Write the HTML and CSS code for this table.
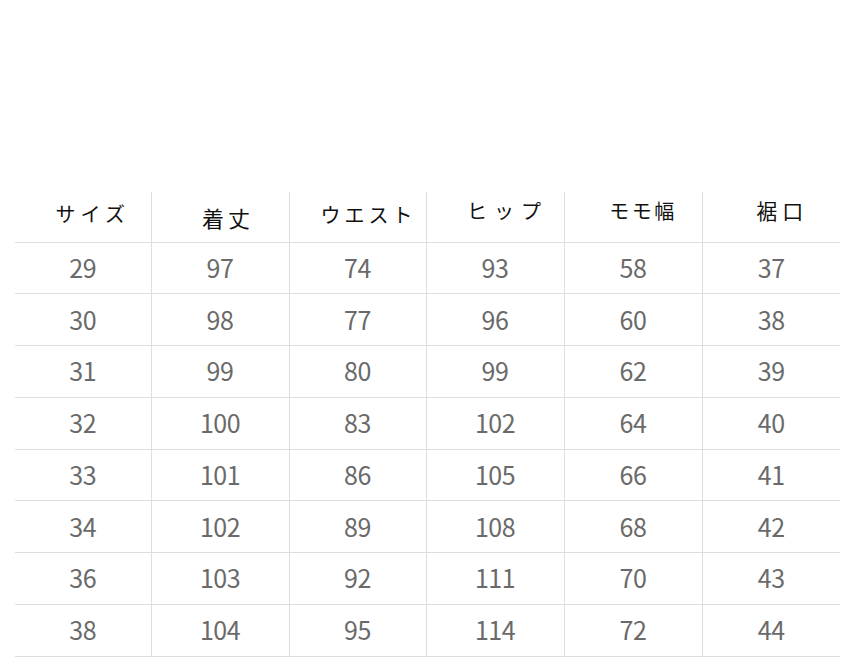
FILE: index.html
```html
<!DOCTYPE html>
<html lang="ja">
<head>
<meta charset="utf-8">
<link rel="stylesheet" href="styles.css">
</head>
<body>
<table class="size-table">
  <colgroup>
    <col class="c1"><col class="c2"><col class="c3"><col class="c4"><col class="c5"><col class="c6">
  </colgroup>
  <thead>
    <tr class="head-row">
      <th class="h-size">サイズ</th>
      <th class="h-length">着丈</th>
      <th class="h-waist">ウエスト</th>
      <th class="h-hip">ヒップ</th>
      <th class="h-thigh">モモ幅</th>
      <th class="h-hem">裾口</th>
    </tr>
  </thead>
  <tbody>
    <tr><td>29</td><td>97</td><td>74</td><td>93</td><td>58</td><td>37</td></tr>
    <tr><td>30</td><td>98</td><td>77</td><td>96</td><td>60</td><td>38</td></tr>
    <tr><td>31</td><td>99</td><td>80</td><td>99</td><td>62</td><td>39</td></tr>
    <tr><td>32</td><td>100</td><td>83</td><td>102</td><td>64</td><td>40</td></tr>
    <tr><td>33</td><td>101</td><td>86</td><td>105</td><td>66</td><td>41</td></tr>
    <tr><td>34</td><td>102</td><td>89</td><td>108</td><td>68</td><td>42</td></tr>
    <tr><td>36</td><td>103</td><td>92</td><td>111</td><td>70</td><td>43</td></tr>
    <tr><td>38</td><td>104</td><td>95</td><td>114</td><td>72</td><td>44</td></tr>
  </tbody>
</table>
</body>
</html>
```
FILE: styles.css
```css
html, body {
  margin: 0;
  padding: 0;
  background: #ffffff;
}
body {
  padding: 192px 0 0 15px;
  font-family: "Noto Sans CJK JP", "Noto Sans", sans-serif;
}
.size-table {
  border-collapse: collapse;
  table-layout: fixed;
  width: 825px;
}
.c1 { width: 136px; }
.c2 { width: 138px; }
.c3 { width: 137px; }
.c4 { width: 138px; }
.c5 { width: 138px; }
.c6 { width: 138px; }

.size-table th,
.size-table td {
  border-left: 1px solid #dedede;
  border-bottom: 1px solid #dedede;
  text-align: center;
  padding: 0;
}
.size-table th:first-child,
.size-table td:first-child { border-left: none; }

.head-row { height: 50px; }

.size-table th {
  font-weight: 400;
  font-size: 20px;
  line-height: 28px;
  color: #111;
  vertical-align: top;
  letter-spacing: 5px;
}
.size-table .h-size { padding: 8px 0 0 20px; }
.size-table .h-length { padding: 11px 0 0 16px; letter-spacing: 4px; font-size: 22px; }
.size-table .h-waist { padding: 9px 0 0 22px; letter-spacing: 4px; }
.size-table .h-hip { padding: 5px 0 0 25px; letter-spacing: 7px; }
.size-table .h-thigh { padding: 5px 0 0 20px; letter-spacing: 2.5px; }
.size-table .h-hem { padding: 4px 0 0 22px; letter-spacing: 5px; font-size: 21px; }

.size-table td {
  height: 48.75px;
  font-size: 25px;
  color: #6a6a6a;
  letter-spacing: -0.5px;
  vertical-align: middle;
  padding-bottom: 2px;
}
```
